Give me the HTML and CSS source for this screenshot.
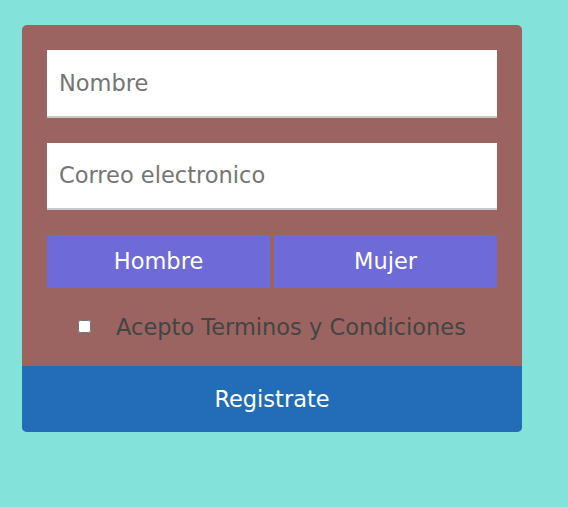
FILE: index.html
```html
<!DOCTYPE html>
<html lang="es">
<head>
<meta charset="utf-8">
<title>Registro</title>
<link rel="stylesheet" href="styles.css">
</head>
<body>
<form class="card">
  <div class="fields">
    <input class="field" type="text" placeholder="Nombre">
    <input class="field" type="email" placeholder="Correo electronico">
    <div class="genders">
      <button type="button" class="gender gender-left">Hombre</button>
      <button type="button" class="gender gender-right">Mujer</button>
    </div>
    <label class="terms">
      <input type="checkbox" class="check">
      <span>Acepto Terminos y Condiciones</span>
    </label>
  </div>
  <button type="submit" class="submit">Registrate</button>
</form>
</body>
</html>
```
FILE: styles.css
```css
* { box-sizing: border-box; }
html, body { margin: 0; padding: 0; }
body {
  background: #83e2da;
  font-family: "DejaVu Sans", Verdana, sans-serif;
  font-size: 22.5px;
  padding: 25px 0 0 22px;
  min-height: 507px;
}
.card {
  width: 500px;
  background: #9b6460;
  border-radius: 5px;
  overflow: hidden;
  margin: 0;
}
.fields {
  padding: 25px 25px 0;
  display: flex;
  flex-direction: column;
}
.field {
  display: block;
  width: 450px;
  height: 67.6px;
  border: 0;
  border-bottom: 2px solid #c9c9c9;
  background: #fff;
  padding: 0 12px;
  font-family: inherit;
  font-size: 22.5px;
  color: #333;
  outline: none;
  margin: 0 0 25px;
}
.field::placeholder { color: #757575; }
.genders {
  display: flex;
  gap: 4px;
  height: 52.5px;
}
.gender {
  flex: 1;
  border: 0;
  background: #6e6ad8;
  color: #fff;
  font-family: inherit;
  font-size: 22.5px;
  padding: 0;
  margin: 0;
}
.gender-left { border-radius: 3px 0 0 3px; }
.gender-right { border-radius: 0 3px 3px 0; }
.terms {
  height: 78.3px;
  display: flex;
  align-items: center;
  justify-content: center;
  gap: 25px;
  color: #444;
  font-size: 22.5px;
}
.check {
  width: 13px;
  height: 13px;
  margin: 0;
}
.submit {
  display: block;
  width: 100%;
  height: 66px;
  border: 0;
  margin: 0;
  background: #236db8;
  color: #fff;
  font-family: inherit;
  font-size: 22.5px;
  padding: 0;
}
```
